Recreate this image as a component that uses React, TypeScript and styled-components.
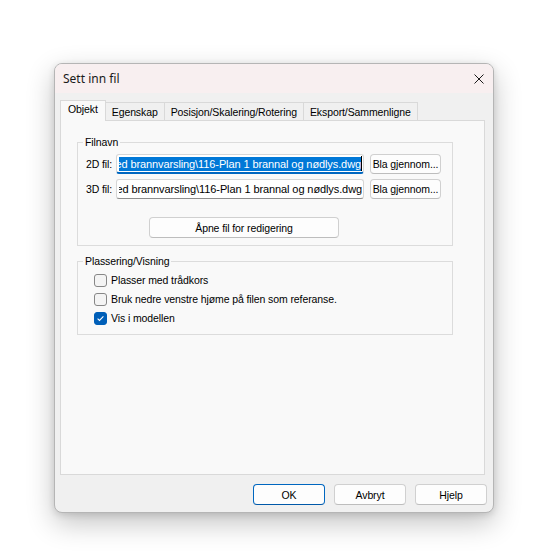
import React from "react";
import styled, { createGlobalStyle } from "styled-components";

const Global = createGlobalStyle`
  html, body { margin: 0; padding: 0; background: #ffffff; }
  body { font-family: "Liberation Sans", Arial, sans-serif; color: #000; }
  * { box-sizing: border-box; }
`;

const Page = styled.div`
  width: 557px;
  height: 554px;
  padding: 63px 0 0 54px;
`;

const Window = styled.div`
  width: 440px;
  height: 450px;
  border: 1px solid #b5b5b5;
  border-radius: 8px;
  background: #f0f0f0;
  box-shadow: 0 10px 28px rgba(0, 0, 0, 0.24), 0 2px 7px rgba(0, 0, 0, 0.12);
  display: flex;
  flex-direction: column;
  overflow: hidden;
  font-family: "Liberation Sans", Arial, sans-serif;
  font-size: 10.5px;
  letter-spacing: -0.1px;
`;

const TitleBar = styled.div`
  height: 29px;
  flex: none;
  background: #f8eff0;
  display: flex;
  align-items: center;
  justify-content: space-between;
  padding: 0 9px 0 8px;
`;

const Title = styled.span`
  font-family: "Noto Sans", "Liberation Sans", sans-serif;
  font-size: 12px;
  letter-spacing: 0;
  color: #1a1a1a;
`;

const CloseIcon = styled.svg`
  display: block;
  margin-top: 1px;
`;

const Body = styled.div`
  flex: 1;
  display: flex;
  flex-direction: column;
  padding: 7px 6px 7px 5px;
  min-height: 0;
`;

const TabStrip = styled.div`
  display: flex;
  align-items: flex-end;
  position: relative;
  z-index: 1;
  margin-bottom: -1px;
  height: 21px;
  flex: none;
`;

const Tab = styled.div<{ $active?: boolean }>`
  height: ${(p) => (p.$active ? "21px" : "18px")};
  margin-bottom: ${(p) => (p.$active ? "0" : "1px")};
  padding: ${(p) => (p.$active ? "2px 7px 0" : "3px 6px 0")};
  border: 1px solid #d9d9d9;
  border-bottom: none;
  background: ${(p) => (p.$active ? "#f9f9f9" : "#f0f0f0")};
  line-height: 13px;
  white-space: nowrap;
  & + & {
    margin-left: -1px;
  }
`;

const Panel = styled.div`
  flex: 1;
  margin-right: 2px;
  border: 1px solid #d9d9d9;
  background: #f9f9f9;
  padding: 15px 31px 0 16px;
  display: flex;
  flex-direction: column;
  min-height: 0;
`;

const Group = styled.fieldset<{ $gapTop?: number }>`
  margin: ${(p) => p.$gapTop ?? 0}px 0 0 0;
  padding: 0;
  border: 1px solid #dcdcdc;
  min-width: 0;
`;

const Legend = styled.legend`
  margin-left: 5px;
  padding: 0 2px;
  line-height: 13px;
`;

const GroupInner = styled.div<{ $pad: string }>`
  padding: ${(p) => p.$pad};
  display: flex;
  flex-direction: column;
`;

const FileRows = styled.div`
  display: grid;
  grid-template-columns: 30px 248px 77px;
  grid-auto-rows: 20px;
  row-gap: 5px;
  align-items: center;
`;

const RowLabel = styled.span`
  line-height: 13px;
  white-space: nowrap;
`;

const Field = styled.div<{ $focused?: boolean }>`
  height: 20px;
  background: #ffffff;
  border: 1px solid #d6d6d6;
  border-bottom: ${(p) => (p.$focused ? "2px solid #0067c0" : "1px solid #8d8d8d")};
  border-radius: 3px;
  display: flex;
  align-items: center;
  padding: 0 1px 0 2px;
  overflow: hidden;
`;

const Clip = styled.div`
  flex: 1;
  min-width: 0;
  overflow: hidden;
  display: flex;
  justify-content: flex-end;
  align-items: center;
  white-space: nowrap;
`;

const Value = styled.span<{ $selected?: boolean }>`
  flex: none;
  font-size: 11px;
  line-height: 14px;
  height: 14px;
  background: ${(p) => (p.$selected ? "#0078d7" : "transparent")};
  color: ${(p) => (p.$selected ? "#ffffff" : "#000000")};
`;

const Caret = styled.span`
  flex: none;
  width: 1px;
  height: 15px;
  background: #000;
`;

const Button = styled.button<{ $w: number; $h?: number; $primary?: boolean }>`
  width: ${(p) => p.$w}px;
  height: ${(p) => p.$h ?? 20}px;
  padding: 0;
  font: inherit;
  letter-spacing: inherit;
  color: #000;
  background: #fdfdfd;
  border: 1px solid ${(p) => (p.$primary ? "#0067c0" : "#d0d0d0")};
  border-bottom-color: ${(p) => (p.$primary ? "#0058a8" : "#bdbdbd")};
  border-radius: 4px;
  white-space: nowrap;
  justify-self: end;
`;

const OpenButton = styled(Button)`
  margin: 18px 0 0 63px;
`;

const CheckRow = styled.label`
  height: 19px;
  display: flex;
  align-items: center;
  gap: 4px;
  line-height: 13px;
  white-space: nowrap;
`;

const Box = styled.span<{ $checked?: boolean }>`
  width: 13px;
  height: 13px;
  flex: none;
  border-radius: 3px;
  border: 1px solid ${(p) => (p.$checked ? "#005fb8" : "#878787")};
  background: ${(p) => (p.$checked ? "#005fb8" : "#f4f4f4")};
  display: flex;
  align-items: center;
  justify-content: center;
`;

const Footer = styled.div`
  flex: none;
  display: flex;
  justify-content: flex-end;
  gap: 9px;
  margin-top: 9px;
`;

const Check = ({ checked, label }: { checked?: boolean; label: string }) => (
  <CheckRow>
    <Box $checked={checked}>
      {checked && (
        <svg width="9" height="9" viewBox="0 0 9 9">
          <path d="M1.6 4.6 L3.5 6.4 L7.4 2.4" fill="none" stroke="#fff" strokeWidth="1.1" />
        </svg>
      )}
    </Box>
    {label}
  </CheckRow>
);

const PATH = "med brannvarsling\\116-Plan 1 brannal og nødlys.dwg";

export default function App() {
  return (
    <>
      <Global />
      <Page>
        <Window>
          <TitleBar>
            <Title>Sett inn fil</Title>
            <CloseIcon width="10" height="10" viewBox="0 0 10 10">
              <path d="M0.5 0.5 L9.5 9.5 M9.5 0.5 L0.5 9.5" stroke="#1b1b1b" strokeWidth="1" />
            </CloseIcon>
          </TitleBar>
          <Body>
            <TabStrip>
              <Tab $active>Objekt</Tab>
              <Tab>Egenskap</Tab>
              <Tab>Posisjon/Skalering/Rotering</Tab>
              <Tab>Eksport/Sammenligne</Tab>
            </TabStrip>
            <Panel>
              <Group>
                <Legend>Filnavn</Legend>
                <GroupInner $pad="5px 10px 7px 8px">
                  <FileRows>
                    <RowLabel>2D fil:</RowLabel>
                    <Field $focused>
                      <Clip>
                        <Value $selected>{PATH}</Value>
                        <Caret />
                      </Clip>
                    </Field>
                    <Button $w={71}>Bla gjennom...</Button>
                    <RowLabel>3D fil:</RowLabel>
                    <Field>
                      <Clip>
                        <Value>{PATH}</Value>
                      </Clip>
                    </Field>
                    <Button $w={71}>Bla gjennom...</Button>
                  </FileRows>
                  <OpenButton $w={190} $h={21}>Åpne fil for redigering</OpenButton>
                </GroupInner>
              </Group>
              <Group $gapTop={9}>
                <Legend>Plassering/Visning</Legend>
                <GroupInner $pad="3px 10px 6px 16px">
                  <Check label="Plasser med trådkors" />
                  <Check label="Bruk nedre venstre hjøme på filen som referanse." />
                  <Check checked label="Vis i modellen" />
                </GroupInner>
              </Group>
            </Panel>
            <Footer>
              <Button $w={72} $h={21} $primary>OK</Button>
              <Button $w={72} $h={21}>Avbryt</Button>
              <Button $w={72} $h={21}>Hjelp</Button>
            </Footer>
          </Body>
        </Window>
      </Page>
    </>
  );
}
